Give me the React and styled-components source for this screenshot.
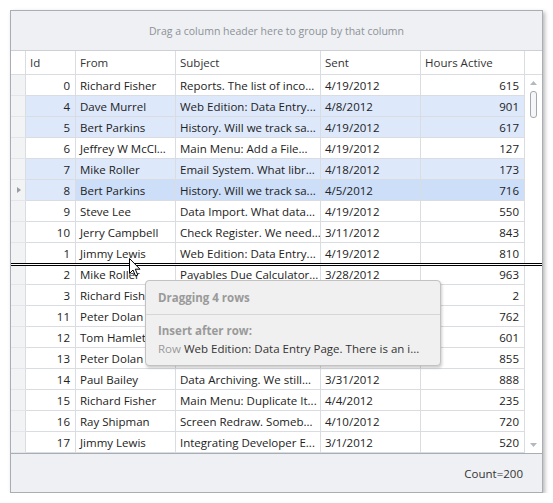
import styled, { createGlobalStyle } from "styled-components";

const GlobalStyle = createGlobalStyle`
  html, body {
    margin: 0;
    padding: 0;
    background: #fff;
  }
  body {
    font-family: "Open Sans", "Noto Sans", sans-serif;
    font-size: 11.5px;
    color: #222;
  }
  * {
    box-sizing: border-box;
  }
`;

const ROW_H = 21;

const rows = [
  { id: 0, from: "Richard Fisher", subject: "Reports. The list of inco...", sent: "4/19/2012", hours: 615 },
  { id: 4, from: "Dave Murrel", subject: "Web Edition: Data Entry...", sent: "4/8/2012", hours: 901, selected: true },
  { id: 5, from: "Bert Parkins", subject: "History. Will we track sa...", sent: "4/19/2012", hours: 617, selected: true },
  { id: 6, from: "Jeffrey W McCl...", subject: "Main Menu: Add a File...", sent: "4/19/2012", hours: 127 },
  { id: 7, from: "Mike Roller", subject: "Email System. What libr...", sent: "4/18/2012", hours: 173, selected: true },
  { id: 8, from: "Bert Parkins", subject: "History. Will we track sa...", sent: "4/5/2012", hours: 716, selected: true, focused: true },
  { id: 9, from: "Steve Lee", subject: "Data Import. What data...", sent: "4/19/2012", hours: 550 },
  { id: 10, from: "Jerry Campbell", subject: "Check Register. We need...", sent: "3/11/2012", hours: 843 },
  { id: 1, from: "Jimmy Lewis", subject: "Web Edition: Data Entry...", sent: "4/19/2012", hours: 810 },
  { id: 2, from: "Mike Roller", subject: "Payables Due Calculator...", sent: "3/28/2012", hours: 963 },
  { id: 3, from: "Richard Fisher", subject: "Reports. The list of inco...", sent: "4/2/2012", hours: 2 },
  { id: 11, from: "Peter Dolan", subject: "Main Menu: Add a File...", sent: "4/12/2012", hours: 762 },
  { id: 12, from: "Tom Hamlet", subject: "Email System. What libr...", sent: "4/16/2012", hours: 601 },
  { id: 13, from: "Peter Dolan", subject: "Data Import. What data...", sent: "4/7/2012", hours: 855 },
  { id: 14, from: "Paul Bailey", subject: "Data Archiving. We still...", sent: "3/31/2012", hours: 888 },
  { id: 15, from: "Richard Fisher", subject: "Main Menu: Duplicate It...", sent: "4/4/2012", hours: 235 },
  { id: 16, from: "Ray Shipman", subject: "Screen Redraw. Someb...", sent: "4/10/2012", hours: 720 },
  { id: 17, from: "Jimmy Lewis", subject: "Integrating Developer E...", sent: "3/1/2012", hours: 520 },
];

const COLS = "15px 50px 100px 145px 100px 104px";

const tone = (r) => (r.focused ? "focus" : r.selected ? "sel" : null);

const App = () => {
  return (
    <>
      <GlobalStyle />
      <Grid>
        <GroupPanel>Drag a column header here to group by that column</GroupPanel>
        <HeaderRow>
          <HeaderCell />
          <HeaderCell>Id</HeaderCell>
          <HeaderCell>From</HeaderCell>
          <HeaderCell>Subject</HeaderCell>
          <HeaderCell>Sent</HeaderCell>
          <HeaderCell>Hours Active</HeaderCell>
          <HeaderCell $last />
        </HeaderRow>
        <Body>
          <Rows>
            {rows.map((r) => (
              <Row key={r.id}>
                <Indicator>{r.focused && <RowArrow />}</Indicator>
                <Cell $align="right" $bg={r.selected ? "sel" : null}>
                  {r.id}
                </Cell>
                <Cell $bg={tone(r)}>{r.from}</Cell>
                <Cell $bg={tone(r)}>{r.subject}</Cell>
                <Cell $bg={tone(r)}>{r.sent}</Cell>
                <Cell $align="right" $bg={tone(r)}>
                  {r.hours}
                </Cell>
              </Row>
            ))}
          </Rows>
          <ScrollBar>
            <ScrollArrow>
              <svg width="7" height="4" viewBox="0 0 7 4">
                <path d="M0 4 L3.5 0 L7 4 Z" fill="#b4b8be" />
              </svg>
            </ScrollArrow>
            <Track>
              <Thumb />
            </Track>
            <ScrollArrow>
              <svg width="7" height="4" viewBox="0 0 7 4">
                <path d="M0 0 L3.5 4 L7 0 Z" fill="#b4b8be" />
              </svg>
            </ScrollArrow>
          </ScrollBar>
          <DropLine style={{ top: 9 * ROW_H - 1 }} />
        </Body>
        <Footer>Count=200</Footer>

        <DragHint>
          <HintTitle>Dragging 4 rows</HintTitle>
          <HintBody>
            <HintLabel>Insert after row:</HintLabel>
            <HintRow>
              <span>Row </span>
              <strong>Web Edition: Data Entry Page. There is an i...</strong>
            </HintRow>
          </HintBody>
        </DragHint>

        <Cursor width="12" height="19" viewBox="0 0 12 19">
          <path
            d="M0.5 0.5 L0.5 15.5 L4 12 L6.5 18 L8.8 17 L6.3 11.2 L11 11.2 Z"
            fill="#fff"
            stroke="#000"
            strokeWidth="1"
            strokeLinejoin="round"
          />
        </Cursor>
      </Grid>
    </>
  );
};

export default App;

const Grid = styled.div`
  position: relative;
  margin: 10px 0 0 10px;
  width: 533px;
  height: 483px;
  border: 1px solid #a9aeb5;
  box-shadow: 2px 2px 4px rgba(0, 0, 0, 0.28);
  display: flex;
  flex-direction: column;
  background: #fff;
`;

const GroupPanel = styled.div`
  height: 40px;
  flex-shrink: 0;
  display: flex;
  align-items: center;
  justify-content: center;
  background: #eef0f3;
  border-bottom: 1px solid #cdd0d5;
  color: #8d9197;
  font-size: 10.5px;
`;

const HeaderRow = styled.div`
  display: grid;
  grid-template-columns: ${COLS} 1fr;
  height: 24px;
  flex-shrink: 0;
  border-bottom: 1px solid #d9dce0;
`;

const HeaderCell = styled.div`
  display: flex;
  align-items: center;
  padding: 0 4px;
  border-right: ${(p) => (p.$last ? "none" : "1px solid #d9dce0")};
  color: #333;
  white-space: nowrap;
  overflow: hidden;
`;

const Body = styled.div`
  position: relative;
  display: flex;
  flex-shrink: 0;
  height: ${18 * ROW_H + 1}px;
  border-bottom: 1px solid #a9aeb5;
`;

const Rows = styled.div`
  display: flex;
  flex-direction: column;
  width: 514px;
`;

const Row = styled.div`
  display: grid;
  grid-template-columns: ${COLS};
  height: ${ROW_H}px;
`;

const Indicator = styled.div`
  position: relative;
  background: #f2f3f5;
  border-right: 1px solid #d9dce0;
  border-bottom: 1px solid #e3e5e8;
`;

const RowArrow = styled.span`
  position: absolute;
  left: 6px;
  top: 7px;
  width: 0;
  height: 0;
  border-top: 3px solid transparent;
  border-bottom: 3px solid transparent;
  border-left: 4px solid #9a9ea4;
`;

const Cell = styled.div`
  display: flex;
  align-items: center;
  justify-content: ${(p) => (p.$align === "right" ? "flex-end" : "flex-start")};
  padding: 0 5px 0 4px;
  background: ${(p) => (p.$bg === "focus" ? "#cddef8" : p.$bg === "sel" ? "#dde8fb" : "#fff")};
  border-right: 1px solid #d9dce0;
  border-bottom: 1px solid #d9dce0;
  white-space: nowrap;
  overflow: hidden;
  color: #222;
`;

const ScrollBar = styled.div`
  width: 17px;
  display: flex;
  flex-direction: column;
  align-items: center;
`;

const ScrollArrow = styled.div`
  height: 16px;
  display: flex;
  align-items: center;
  justify-content: center;
`;

const Track = styled.div`
  flex: 1;
  width: 100%;
  display: flex;
  justify-content: center;
`;

const Thumb = styled.div`
  width: 7px;
  height: 27px;
  border: 1px solid #a3a8ae;
  border-radius: 3px;
  background: #f5f6f7;
`;

const DropLine = styled.div`
  position: absolute;
  left: 0;
  right: 0;
  height: 3px;
  border-top: 1px solid #000;
  border-bottom: 1px solid #000;
  background: #fff;
`;

const Footer = styled.div`
  flex: 1;
  display: flex;
  align-items: center;
  justify-content: flex-end;
  padding-right: 19px;
  background: #eef0f3;
  color: #333;
`;

const DragHint = styled.div`
  position: absolute;
  left: 134px;
  top: 269px;
  width: 296px;
  height: 86px;
  background: #f0f0f0;
  border: 1px solid #c2c2c2;
  border-radius: 4px;
  box-shadow: 1px 2px 3px rgba(0, 0, 0, 0.2);
  display: flex;
  flex-direction: column;
`;

const HintTitle = styled.div`
  height: 34px;
  flex-shrink: 0;
  display: flex;
  align-items: center;
  padding-left: 12px;
  font-weight: bold;
  color: #9a9a9a;
  border-bottom: 1px solid #d6d6d6;
`;

const HintBody = styled.div`
  padding: 8px 12px 0;
  display: flex;
  flex-direction: column;
  gap: 1px;
`;

const HintLabel = styled.div`
  font-weight: bold;
  color: #9a9a9a;
  line-height: 16px;
`;

const HintRow = styled.div`
  line-height: 17px;
  white-space: nowrap;
  color: #9a9a9a;
  strong {
    font-weight: normal;
    color: #333;
  }
`;

const Cursor = styled.svg`
  position: absolute;
  left: 118px;
  top: 247px;
`;
